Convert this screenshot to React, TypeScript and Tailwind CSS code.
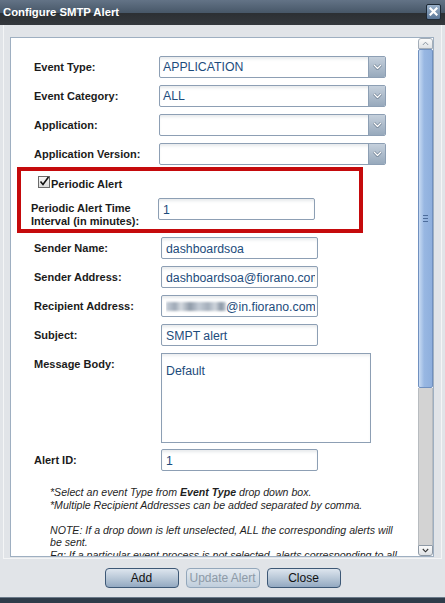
import React from "react";

const inputText = "text-[12.3px] text-[#1d4c7c] leading-none";
const fieldBox =
  "h-[22px] shrink-0 bg-white border border-[#8d9fb4] rounded-[2px] shadow-[inset_0_3px_3px_-1px_rgba(60,80,100,0.12)] flex items-center";

function Chevron({ color = "#ffffff", stroke = "#5c6f84" }: { color?: string; stroke?: string }) {
  return (
    <svg width="9" height="6" viewBox="0 0 9 6">
      <path d="M0.8 0.8 L4.5 4.6 L8.2 0.8" fill="none" stroke={stroke} strokeWidth="2.6" strokeLinejoin="miter" />
      <path d="M0.8 0.8 L4.5 4.6 L8.2 0.8" fill="none" stroke={color} strokeWidth="1.4" strokeLinejoin="miter" />
    </svg>
  );
}

function SelectBox({ value }: { value?: string }) {
  return (
    <div className={`${fieldBox} w-[227px] pl-[3px] justify-between overflow-hidden`}>
      <span className={inputText}>{value}</span>
      <div className="h-full w-[17px] border-l border-[#8d9fb4] bg-[linear-gradient(to_bottom,#c5d0dc,#97a9bc)] flex items-center justify-center">
        <Chevron />
      </div>
    </div>
  );
}

function TextBox({ children, w = "w-[157px]" }: { children?: React.ReactNode; w?: string }) {
  return (
    <div className={`${fieldBox} ${w} pl-[4px] pr-[2px]`}>
      <div className="flex-1 min-w-0 overflow-hidden whitespace-nowrap">
        <span className={inputText}>{children}</span>
      </div>
    </div>
  );
}

function Row({ label, children, top }: { label: string; children: React.ReactNode; top: string }) {
  return (
    <div className={`flex items-center h-[22px] ${top}`}>
      <div className="w-[150px] shrink-0 pl-[23px] text-[11px] font-bold text-[#1b1b1b] whitespace-nowrap">{label}</div>
      {children}
    </div>
  );
}

function DialogButton({ label, disabled }: { label: string; disabled?: boolean }) {
  return (
    <div
      className={
        disabled
          ? "w-[74px] h-[20px] rounded-[4px] border border-[#93a7bb] bg-[linear-gradient(to_bottom,#e4eaf0,#c0cedc)] flex items-center justify-center text-[12px] leading-none text-[#8d9aa7]"
          : "w-[74px] h-[20px] rounded-[4px] border border-[#3d5876] bg-[linear-gradient(to_bottom,#dde5ee_0%,#b9c8d8_50%,#93a9c1_100%)] flex items-center justify-center text-[12px] leading-none text-[#111]"
      }
    >
      {label}
    </div>
  );
}

function ScrollBar() {
  return (
    <div className="w-[15px] shrink-0 flex flex-col">
      <div className="h-[11px] rounded-t-[3px] border border-[#a3adb8] bg-[linear-gradient(to_bottom,#fafafa,#dfe2e5)] flex items-center justify-center">
        <svg width="7" height="5" viewBox="0 0 7 5">
          <path d="M0.8 4 L3.5 1.2 L6.2 4" fill="none" stroke="#8a96a3" strokeWidth="1" />
        </svg>
      </div>
      <div className="h-[339px] border border-[#7090bf] rounded-[2px] bg-[linear-gradient(to_right,#c8dbf3,#98b7e2_40%,#8eafdd)] flex items-center justify-center">
        <div className="flex flex-col gap-[2px]">
          <div className="w-[5px] h-px bg-[#4d6d9c]" />
          <div className="w-[5px] h-px bg-[#4d6d9c]" />
          <div className="w-[5px] h-px bg-[#4d6d9c]" />
        </div>
      </div>
      <div className="flex-1 bg-[#d3d3d3] border-x border-[#b8bcc0]" />
      <div className="h-[11px] rounded-b-[3px] border border-[#8f9aa6] bg-[linear-gradient(to_bottom,#fafafa,#dfe2e5)] flex items-center justify-center">
        <svg width="7" height="5" viewBox="0 0 7 5">
          <path d="M0.8 1 L3.5 3.8 L6.2 1" fill="none" stroke="#333" strokeWidth="1.1" />
        </svg>
      </div>
    </div>
  );
}

export default function App() {
  return (
    <div className="w-[445px] h-[603px] bg-[#e1e4e8] flex flex-col overflow-hidden font-['Liberation_Sans',Arial,sans-serif]">
      {/* window title */}
      <div className="h-[25px] shrink-0 bg-[linear-gradient(to_bottom,#637386_0%,#485869_50%,#2c3034_54%,#34383d_100%)] flex items-center justify-between pl-[3px] pr-[4px]">
        <span className="text-white font-bold text-[11.3px] -mt-[1px]">Configure SMTP Alert</span>
        <div className="w-[15px] h-[16px] -mt-[2px] rounded-[2px] border border-[#1e2935] bg-[linear-gradient(to_bottom,#9ab1ca,#5a7697)] flex items-center justify-center">
          <svg width="9" height="9" viewBox="0 0 9 9">
            <path d="M1.5 1.5 L7.5 7.5 M7.5 1.5 L1.5 7.5" stroke="#ffffff" strokeWidth="2.2" strokeLinecap="square" />
          </svg>
        </div>
      </div>

      {/* dialog body */}
      <div className="h-[534px] shrink-0 mx-[3px] border-x border-b border-[#f4f5f6] pt-[12px] pl-[6px]">
        <div className="w-[424px] h-[520px] bg-white border border-[#9eafc1] flex overflow-hidden">
          <div className="flex-1 min-w-0 overflow-hidden">
            <div className="pt-[18px]">
              <Row label="Event Type:" top="">
                <div className="-ml-[2px]"><SelectBox value="APPLICATION" /></div>
              </Row>
              <Row label="Event Category:" top="mt-[7px]">
                <div className="-ml-[2px]"><SelectBox value="ALL" /></div>
              </Row>
              <Row label="Application:" top="mt-[7px]">
                <div className="-ml-[2px]"><SelectBox /></div>
              </Row>
              <Row label="Application Version:" top="mt-[7px]">
                <div className="-ml-[2px]"><SelectBox /></div>
              </Row>

              {/* periodic alert group */}
              <div className="mt-[2px] ml-[6px] w-[346px] h-[66px] border-[4px] border-[#c50a0c] pt-[4px]">
                <div className="flex items-center h-[13px] pl-[17px]">
                  <div className="w-[12px] h-[12px] border border-[#6b6b6b] bg-[linear-gradient(to_bottom,#f7f7f7,#dcdcdc)] relative">
                    <svg className="absolute -left-[1px] -top-[2px]" width="13" height="13" viewBox="0 0 13 13">
                      <path d="M2.5 6.5 L5 9.5 L10.5 2" fill="none" stroke="#111" strokeWidth="1.6" />
                    </svg>
                  </div>
                  <span className="ml-[1px] mt-[6px] text-[11px] font-bold text-[#1b1b1b]">Periodic Alert</span>
                </div>
                <div className="flex items-start mt-[10px]">
                  <div className="w-[137px] shrink-0 pl-[10px] pt-[4px] text-[11px] font-bold leading-[13px] text-[#1b1b1b]">
                    Periodic Alert Time
                    <br />
                    Interval (in minutes):
                  </div>
                  <TextBox>1</TextBox>
                </div>
              </div>

              <Row label="Sender Name:" top="mt-[4px]">
                <TextBox>dashboardsoa</TextBox>
              </Row>
              <Row label="Sender Address:" top="mt-[7px]">
                <TextBox>dashboardsoa@fiorano.com</TextBox>
              </Row>
              <Row label="Recipient Address:" top="mt-[7px]">
                <TextBox>
                  <span className="inline-block align-middle w-[60px] h-[9px] -mt-[2px] blur-[0.8px] bg-[linear-gradient(to_right,#c8d0da_0%,#9ea9b6_15%,#d6dbe1_25%,#8f9aa8_40%,#c4ccd6_55%,#a4aebb_70%,#d0d6dd_82%,#8894a3_92%,#c9d0d8_100%)]" />
                  @in.fiorano.com
                </TextBox>
              </Row>
              <Row label="Subject:" top="mt-[7px]">
                <TextBox>SMPT alert</TextBox>
              </Row>

              <div className="flex items-start mt-[7px]">
                <div className="w-[150px] shrink-0 pl-[23px] pt-[3px] text-[11px] font-bold text-[#1b1b1b]">Message Body:</div>
                <div className="w-[210px] h-[90px] shrink-0 bg-white border border-[#8d9fb4] shadow-[inset_0_3px_3px_-1px_rgba(60,80,100,0.1)] pl-[4px] pt-[4px]">
                  <span className={inputText}>Default</span>
                </div>
              </div>

              <Row label="Alert ID:" top="mt-[6px]">
                <TextBox>1</TextBox>
              </Row>

              <div className="mt-[15px] ml-[39px] w-[356px] h-[70px] overflow-hidden whitespace-nowrap text-[10.6px] italic leading-[12.6px] text-[#1f1f1f]">
                <p>
                  *Select an event Type from <b>Event Type</b> drop down box.
                </p>
                <p>*Multiple Recipient Addresses can be added separated by comma.</p>
                <p className="mt-[12.6px]">
                  NOTE: If a drop down is left unselected, ALL the corresponding alerts will
                  <br />
                  be sent.
                </p>
                <p>Eg: If a particular event process is not selected, alerts corresponding to all</p>
              </div>
            </div>
          </div>
          <ScrollBar />
        </div>
      </div>

      {/* action buttons */}
      <div className="h-[20px] mt-[9px] shrink-0 flex justify-center gap-[7px]">
        <DialogButton label="Add" />
        <DialogButton label="Update Alert" disabled />
        <DialogButton label="Close" />
      </div>

      <div className="mt-auto h-[6px] shrink-0 border-t border-[#6b7a8a] bg-[#2f3c4a]" />
    </div>
  );
}
